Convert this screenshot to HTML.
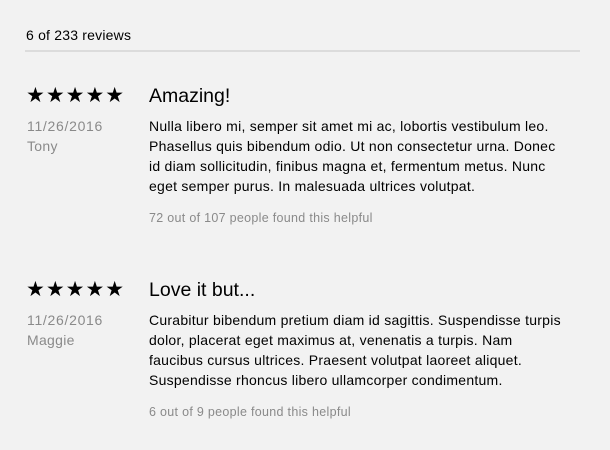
<!DOCTYPE html>
<html><head><meta charset="utf-8"><style>
html,body{margin:0;padding:0;background:#f2f2f2;width:610px;height:450px;overflow:hidden;font-family:"Liberation Sans",sans-serif;color:#000}
.hdr{position:absolute;left:26px;top:27px;font-size:14px;letter-spacing:0.2px}
.div{position:absolute;left:25px;top:50px;width:555px;height:2px;background:#dcdcdc}
.rev{position:absolute;left:0;width:610px}
.stars{position:absolute;left:26px;top:0;font-size:21px;letter-spacing:1px;line-height:24px}
.title{position:absolute;left:149px;top:0;font-size:19.5px;line-height:24px}
.date,.name{position:absolute;left:27px;font-size:14px;letter-spacing:0.7px;color:#8a8a8a;line-height:20px}
.name{letter-spacing:0.3px}
.date{top:32px}.name{top:52px}
.body{position:absolute;left:149px;top:32px;font-size:14px;letter-spacing:0.25px;line-height:20px;white-space:nowrap}
.help{position:absolute;left:149px;font-size:12.5px;letter-spacing:0.3px;color:#8a8a8a;line-height:16px}
</style></head><body>
<div class="hdr">6 of 233 reviews</div>
<div class="div"></div>
<div class="rev" style="top:84px">
<div class="stars">★★★★★</div>
<div class="title">Amazing!</div>
<div class="date">11/26/2016</div>
<div class="name">Tony</div>
<div class="body">Nulla libero mi, semper sit amet mi ac, lobortis vestibulum leo.<br>Phasellus quis bibendum odio. Ut non consectetur urna. Donec<br>id diam sollicitudin, finibus magna et, fermentum metus. Nunc<br>eget semper purus. In malesuada ultrices volutpat.</div>
<div class="help" style="top:126px">72 out of 107 people found this helpful</div>
</div>
<div class="rev" style="top:278px">
<div class="stars">★★★★★</div>
<div class="title">Love it but...</div>
<div class="date">11/26/2016</div>
<div class="name">Maggie</div>
<div class="body">Curabitur bibendum pretium diam id sagittis. Suspendisse turpis<br>dolor, placerat eget maximus at, venenatis a turpis. Nam<br>faucibus cursus ultrices. Praesent volutpat laoreet aliquet.<br>Suspendisse rhoncus libero ullamcorper condimentum.</div>
<div class="help" style="top:126px">6 out of 9 people found this helpful</div>
</div>
</body></html>
